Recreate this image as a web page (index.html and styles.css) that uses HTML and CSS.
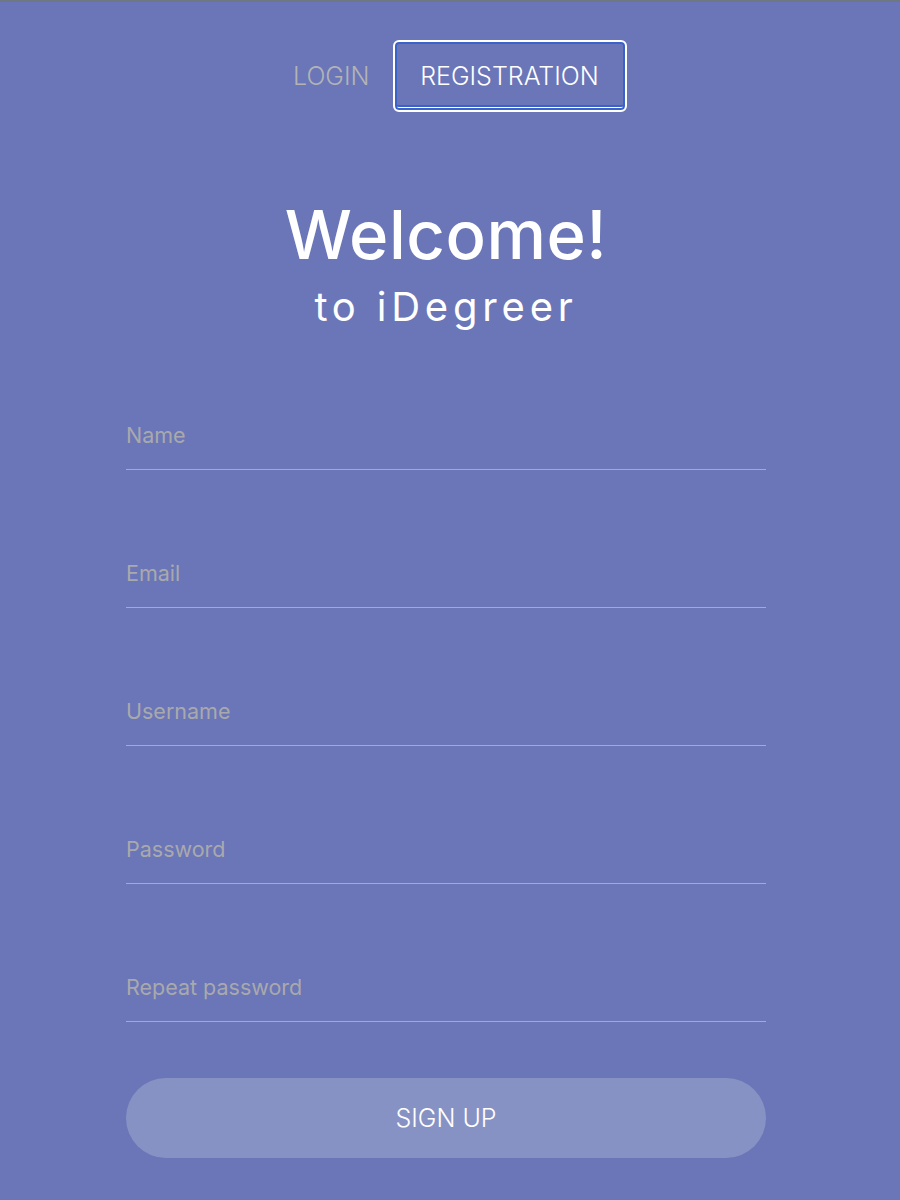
FILE: index.html
```html
<!DOCTYPE html>
<html>
<head>
<meta charset="utf-8">
<link rel="stylesheet" href="styles.css">
</head>
<body>
<div class="topline"></div>
<div class="page">
  <nav class="tabs">
    <span class="tab">LOGIN</span>
    <span class="tab active">REGISTRATION</span>
  </nav>
  <h1 class="title">Welcome!</h1>
  <p class="subtitle">to iDegreer</p>
  <form class="form">
    <div class="field"><span class="label">Name</span></div>
    <div class="field"><span class="label">Email</span></div>
    <div class="field"><span class="label">Username</span></div>
    <div class="field"><span class="label">Password</span></div>
    <div class="field"><span class="label">Repeat password</span></div>
    <div class="submit">SIGN UP</div>
  </form>
</div>
</body>
</html>
```
FILE: styles.css
```css
html, body {
  margin: 0;
  padding: 0;
  background: #6a76b7;
  height: 100%;
}
body {
  font-family: Inter, "Noto Sans", sans-serif;
  color: #ffffff;
}
.topline {
  height: 2px;
  background: #6f7782;
}
.page {
  width: 640px;
  margin-left: 126px;
}
.tabs {
  display: flex;
  align-items: center;
  gap: 23px;
  padding-left: 167px;
  margin-top: 38px;
  height: 72px;
}
.tab {
  font-family: Inter, sans-serif;
  font-size: 25px;
  font-weight: 300;
  color: #b3b3b6;
}
.tab.active {
  color: #ffffff;
  box-sizing: border-box;
  height: 72px;
  width: 234px;
  display: flex;
  align-items: center;
  justify-content: center;
  border: 2px solid #ffffff;
  border-radius: 6px;
  box-shadow: inset 0 0 0 2px #3a62c8, inset 0 -3px 0 0 #ffffff, inset 0 -5px 0 0 #3a62c8;
}
.title {
  margin: 82px 0 0 0;
  text-align: center;
  font-size: 67px;
  font-weight: 500;
  line-height: 82px;
  letter-spacing: 0.5px;
}
.subtitle {
  margin: 7px 0 0 0;
  text-align: center;
  font-size: 40px;
  line-height: 48px;
  letter-spacing: 4.8px;
}
.form {
  margin-top: 76px;
}
.field {
  height: 63px;
  box-sizing: border-box;
  padding-top: 15px;
  border-bottom: 1px solid #a2a9d8;
  margin-bottom: 75px;
}
.label {
  font-size: 21.5px;
  line-height: 26px;
  color: #a9a9ad;
}
.submit {
  margin-top: -19px;
  height: 80px;
  border-radius: 40px;
  background: #8792c4;
  display: flex;
  align-items: center;
  justify-content: center;
  font-family: Inter, sans-serif;
  font-size: 25px;
  font-weight: 300;
  color: #ffffff;
}
```
